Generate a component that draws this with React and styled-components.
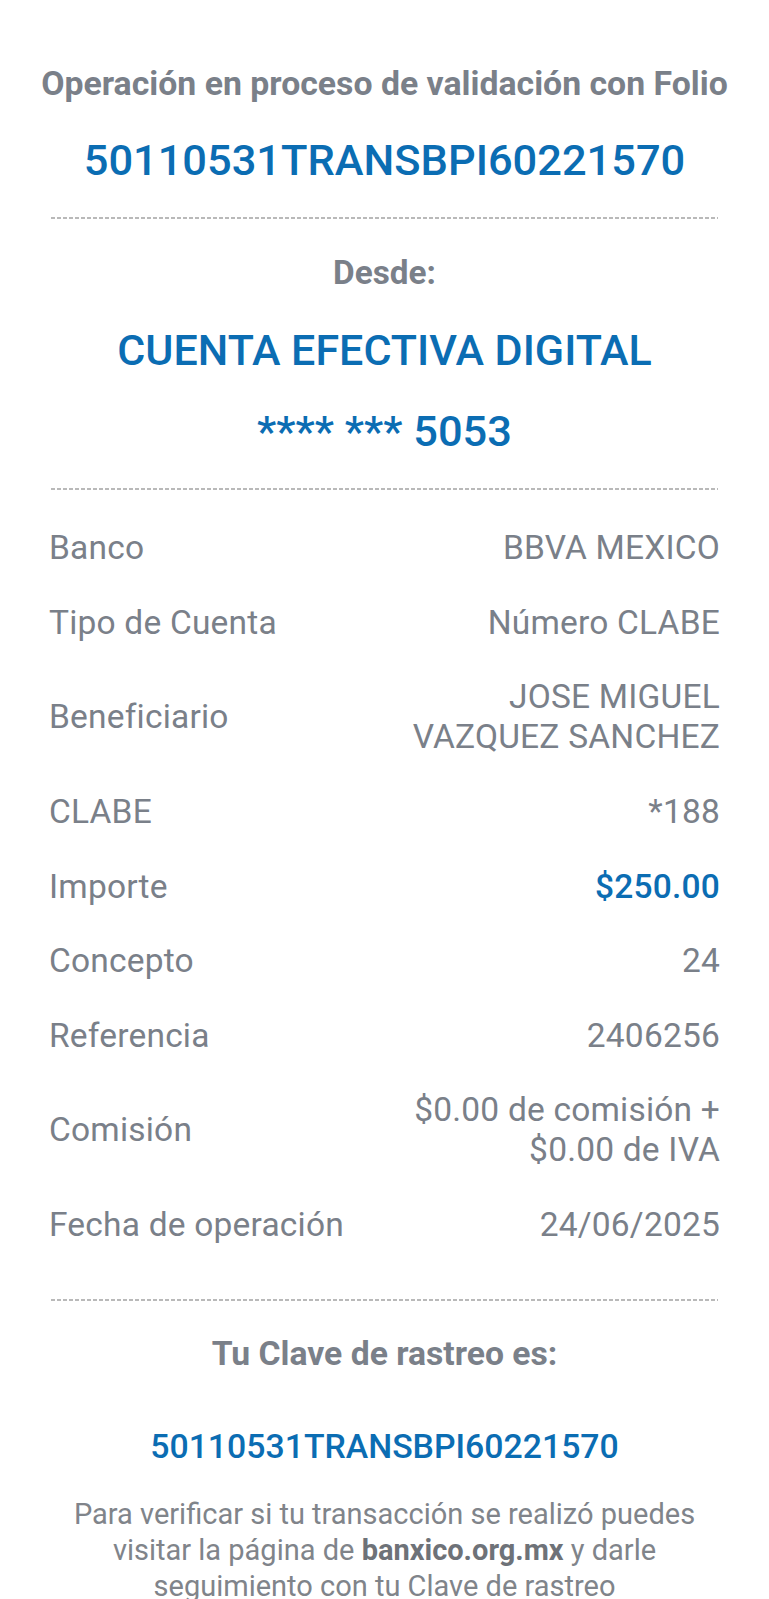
import React from "react";
import styled, { createGlobalStyle } from "styled-components";

const GlobalStyle = createGlobalStyle`
  html, body {
    margin: 0;
    padding: 0;
    background: #ffffff;
  }
  body {
    font-family: Roboto, "Noto Sans", "Liberation Sans", sans-serif;
    -webkit-font-smoothing: antialiased;
  }
`;

const GREY = "#7a8089";
const BLUE = "#0b6db3";

const Page = styled.main`
  display: flex;
  flex-direction: column;
  padding: 64px 49px 0;
  box-sizing: border-box;
  width: 769px;
  min-height: 1599px;
  background: #fff;
`;

const Heading = styled.h1`
  margin: ${(p) => p.$mt || 0}px -40px 0;
  text-align: center;
  color: ${GREY};
  font-weight: 700;
  font-size: ${(p) => p.$size}px;
  line-height: ${(p) => p.$lh}px;
  white-space: nowrap;
`;

const Highlight = styled.div`
  margin: ${(p) => p.$mt || 0}px -40px 0;
  text-align: center;
  color: ${BLUE};
  font-weight: 500;
  font-size: ${(p) => p.$size}px;
  line-height: ${(p) => p.$lh}px;
  white-space: nowrap;
`;

const Divider = styled.hr`
  margin: ${(p) => p.$mt}px 2px 0;
  border: 0;
  height: 2px;
  background: repeating-linear-gradient(
    to right,
    #b9b9b9 0 4px,
    transparent 4px 6px
  );
`;

const DetailList = styled.dl`
  margin: ${(p) => p.$mt}px 0 0;
  display: flex;
  flex-direction: column;
`;

const Row = styled.div`
  display: flex;
  align-items: center;
  justify-content: space-between;
  gap: 24px;
  padding: 17.3px 0;
  font-size: 33.5px;
  line-height: 40px;
  letter-spacing: 0.2px;
  color: ${GREY};
`;

const Label = styled.dt`
  margin: 0;
  white-space: nowrap;
`;

const Value = styled.dd`
  margin: 0;
  text-align: right;
  white-space: nowrap;
  color: ${(p) => (p.$accent ? BLUE : GREY)};
  font-weight: ${(p) => (p.$accent ? 500 : 400)};
`;

const Note = styled.p`
  margin: 29px 0 0;
  padding: 0 10px;
  text-align: center;
  color: #80848a;
  font-size: 29px;
  line-height: 36px;
  strong {
    font-weight: 700;
    color: #6e7278;
  }
`;

const rows = [
  { label: "Banco", value: ["BBVA MEXICO"] },
  { label: "Tipo de Cuenta", value: ["Número CLABE"] },
  { label: "Beneficiario", value: ["JOSE MIGUEL", "VAZQUEZ SANCHEZ"] },
  { label: "CLABE", value: ["*188"] },
  { label: "Importe", value: ["$250.00"], accent: true },
  { label: "Concepto", value: ["24"] },
  { label: "Referencia", value: ["2406256"] },
  { label: "Comisión", value: ["$0.00 de comisión +", "$0.00 de IVA"] },
  { label: "Fecha de operación", value: ["24/06/2025"] },
];

export default function App() {
  return (
    <>
      <GlobalStyle />
      <Page>
        <Heading $size={33.8} $lh={40}>
          Operación en proceso de validación con Folio
        </Heading>
        <Highlight $mt={32} $size={43.4} $lh={50}>
          50110531TRANSBPI60221570
        </Highlight>
        <Divider $mt={31} />
        <Heading $mt={36} $size={33.3} $lh={36}>
          Desde:
        </Heading>
        <Highlight $mt={37} $size={43} $lh={44}>
          CUENTA EFECTIVA DIGITAL
        </Highlight>
        <Highlight $mt={36} $size={43.4} $lh={48}>
          **** *** 5053
        </Highlight>
        <Divider $mt={32} />
        <DetailList $mt={21}>
          {rows.map((r) => (
            <Row key={r.label}>
              <Label>{r.label}</Label>
              <Value $accent={r.accent}>
                {r.value.map((v, i) => (
                  <React.Fragment key={i}>
                    {i > 0 && <br />}
                    {v}
                  </React.Fragment>
                ))}
              </Value>
            </Row>
          ))}
        </DetailList>
        <Divider $mt={37} />
        <Heading $mt={35} $size={33.7} $lh={36}>
          Tu Clave de rastreo es:
        </Heading>
        <Highlight $mt={55} $size={33.8} $lh={40}>
          50110531TRANSBPI60221570
        </Highlight>
        <Note>
          Para verificar si tu transacción se realizó puedes
          <br />
          visitar la página de <strong>banxico.org.mx</strong> y darle
          <br />
          seguimiento con tu Clave de rastreo
        </Note>
      </Page>
    </>
  );
}
